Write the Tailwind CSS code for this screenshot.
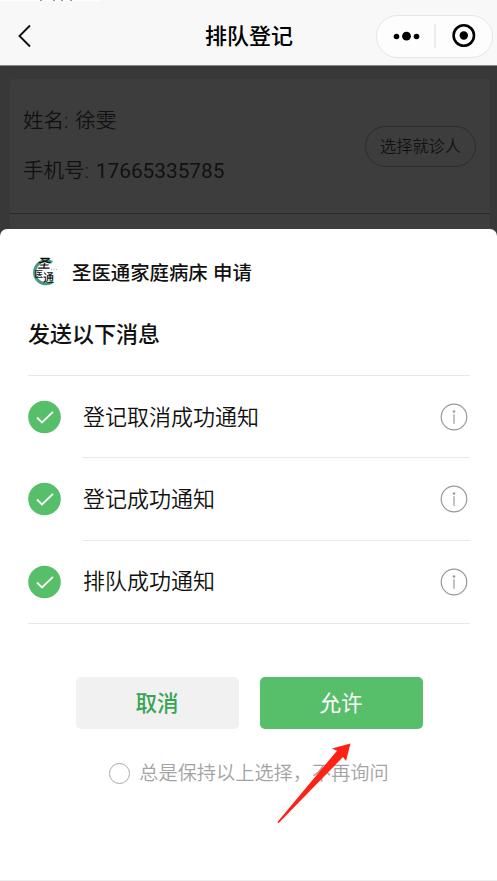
<!DOCTYPE html>
<html lang="zh-CN">
<head>
<meta charset="utf-8">
<title>排队登记</title>
<script src="https://cdn.jsdelivr.net/npm/@tailwindcss/browser@4"></script>
</head>
<body class="bg-white">
<div class="relative flex h-[881px] w-[497px] flex-col overflow-hidden bg-[#383838] font-['Liberation_Sans','Noto_Sans_CJK_SC',sans-serif] whitespace-nowrap">
  <header class="grid h-[66px] shrink-0 grid-cols-3 items-center border-b border-[#8a8a8a] bg-[#f8f8f8] pt-[7px] pr-[4px] pl-[17px]">
    <svg class="h-[24px] w-[16px]" viewBox="0 0 16 24" fill="none" stroke="#111" stroke-width="1.9"><path d="M13 1.5 2.5 12 13 22.5"/></svg>
    <h1 class="-ml-[12px] pt-[1px] text-center text-[22px] leading-[32px] font-medium text-black">排队登记</h1>
    <div class="flex h-[43px] w-[117px] items-center justify-self-end rounded-full border border-[#e6e6e6] bg-[#fdfdfd]">
      <svg class="h-[41px] w-[115px]" viewBox="0 0 115 41"><g fill="#000"><circle cx="19.5" cy="20.5" r="2.8"/><circle cx="29.5" cy="20.2" r="4.4"/><circle cx="39.5" cy="20.5" r="2.8"/><circle cx="86.8" cy="19.5" r="4.2"/></g><path d="M58 7.5v25" stroke="#ddd"/><circle cx="86.8" cy="19.5" r="10.2" fill="none" stroke="#000" stroke-width="2.6"/></svg>
    </div>
  </header>
  <main class="pt-[13px] pr-[7px] pl-[10px]">
    <section class="h-[170px] rounded-t-[4px] bg-[#3d3d3d]">
      <div class="flex h-[135px] items-center justify-between border-b border-[#2b2b2b] pr-[14px] pl-[13px] text-[20.5px] text-[#111]">
        <div class="flex flex-col gap-[20px] font-['Roboto','Noto_Sans_CJK_SC',sans-serif] leading-[30px] font-[350] [word-spacing:2px]">
          <p>姓名: 徐雯</p>
          <p>手机号: <span class="text-[20.8px] font-normal">17665335785</span></p>
        </div>
        <button class="flex h-[41px] w-[111px] items-center justify-center rounded-full border border-[#2c2c2c] text-[16.2px] font-[350]">选择就诊人</button>
      </div>
    </section>
  </main>
  <section class="absolute inset-x-0 top-[229px] bottom-0 flex flex-col rounded-t-[7px] border-b border-[#eee] bg-white pr-[27px] pl-[28px] text-[#111]">
    <div class="mt-[24px] flex h-[38px] items-center gap-[10px] text-[19.4px] font-medium">
      <svg class="h-[38px] w-[34px]" viewBox="0 0 34 38">
        <path d="M24 9.500C21 7 16 6.500 12 9.500c-6 4-7 12-3 17s11 5.500 16 2" fill="none" stroke="#459783" stroke-width="3"/>
        <g fill="#111" font-family="Noto Sans CJK SC" font-weight="500"><text x="10" y="15.500" font-size="13" transform="skewX(-10) translate(2 0)">圣</text><text x="6.500" y="23.500" font-size="8.500">医</text><text x="15" y="29" font-size="11">通</text></g>
        <path d="M23 16.500h7" stroke="#999" stroke-dasharray="1 1.500" stroke-width=".8"/>
      </svg>
      <span class="pt-[3px]">圣医通家庭病床 申请</span>
    </div>
    <h2 class="mt-[28px] text-[22px] leading-[32px] font-medium">发送以下消息</h2>
    <ul class="mt-[24px] flex h-[249px] flex-col border-y border-[#e7e7e7] text-[22px]">
      <li class="flex flex-1 items-center">
        <svg class="w-[55px] shrink-0" height="34" viewBox="0 0 55 34"><circle cx="16.5" cy="17" r="16.3" fill="#57be6a"/><path d="m9 17.5 5 5L25 11.8" fill="none" stroke="#fff" stroke-width="1.8"/></svg>
        <div class="flex h-full flex-1 items-center justify-between border-b border-[#e9e9e9] pr-[2px] font-[350]"><span class="pt-px">登记取消成功通知</span>
          <svg width="28" height="28" viewBox="0 0 28 28" fill="none" stroke="#999"><circle cx="14" cy="14" r="12.8" stroke-width="1.2"/><path d="M14 11.3v9.4" stroke-width="1.2"/><circle cx="14" cy="8.5" r="1.3" fill="#999" stroke="none"/></svg></div>
      </li>
      <li class="flex flex-1 items-center">
        <svg class="w-[55px] shrink-0" height="34" viewBox="0 0 55 34"><circle cx="16.5" cy="17" r="16.3" fill="#57be6a"/><path d="m9 17.5 5 5L25 11.8" fill="none" stroke="#fff" stroke-width="1.8"/></svg>
        <div class="flex h-full flex-1 items-center justify-between border-b border-[#e9e9e9] pr-[2px] font-[350]"><span class="pt-px">登记成功通知</span>
          <svg width="28" height="28" viewBox="0 0 28 28" fill="none" stroke="#999"><circle cx="14" cy="14" r="12.8" stroke-width="1.2"/><path d="M14 11.3v9.4" stroke-width="1.2"/><circle cx="14" cy="8.5" r="1.3" fill="#999" stroke="none"/></svg></div>
      </li>
      <li class="flex flex-1 items-center">
        <svg class="w-[55px] shrink-0" height="34" viewBox="0 0 55 34"><circle cx="16.5" cy="17" r="16.3" fill="#57be6a"/><path d="m9 17.5 5 5L25 11.8" fill="none" stroke="#fff" stroke-width="1.8"/></svg>
        <div class="flex h-full flex-1 items-center justify-between pr-[2px] font-[350]"><span>排队成功通知</span>
          <svg width="28" height="28" viewBox="0 0 28 28" fill="none" stroke="#999"><circle cx="14" cy="14" r="12.8" stroke-width="1.2"/><path d="M14 11.3v9.4" stroke-width="1.2"/><circle cx="14" cy="8.5" r="1.3" fill="#999" stroke="none"/></svg></div>
      </li>
    </ul>
    <div class="mt-[53px] flex justify-center gap-[21px] pl-px text-[21.5px]">
      <button class="h-[52px] w-[163px] rounded-[5px] bg-[#f1f1f1] pt-[2px] pr-px font-medium text-[#38a553]">取消</button>
      <button class="h-[52px] w-[163px] rounded-[5px] bg-[#57be6a] pt-[2px] pr-px text-white">允许</button>
    </div>
    <label class="mt-[29px] flex items-center justify-center gap-[9px] text-[19.2px] leading-[30px] font-[350] text-[#a3a3a3]"><span class="size-[21px] rounded-full border border-[#aaa]"></span><span class="pt-px">总是保持以上选择，不再询问</span></label>
  </section>
  <svg class="absolute top-[740px] left-[275px]" width="80" height="86" viewBox="0 0 80 86"><path d="M75.5 3.5 57 8.5l5 2.2L2.5 82l1 1.2L68 17l3 4Z" fill="#ff2016"/></svg>
  <svg class="absolute top-0 left-0" width="120" height="1" viewBox="0 0 120 1" fill="none"><path d="M0 .5h100" stroke="#fff"/><path d="M40 .5h2M53 .5h2M61 .5h2M70 .5h2" stroke="#999"/></svg>
</div>
</body>
</html>
